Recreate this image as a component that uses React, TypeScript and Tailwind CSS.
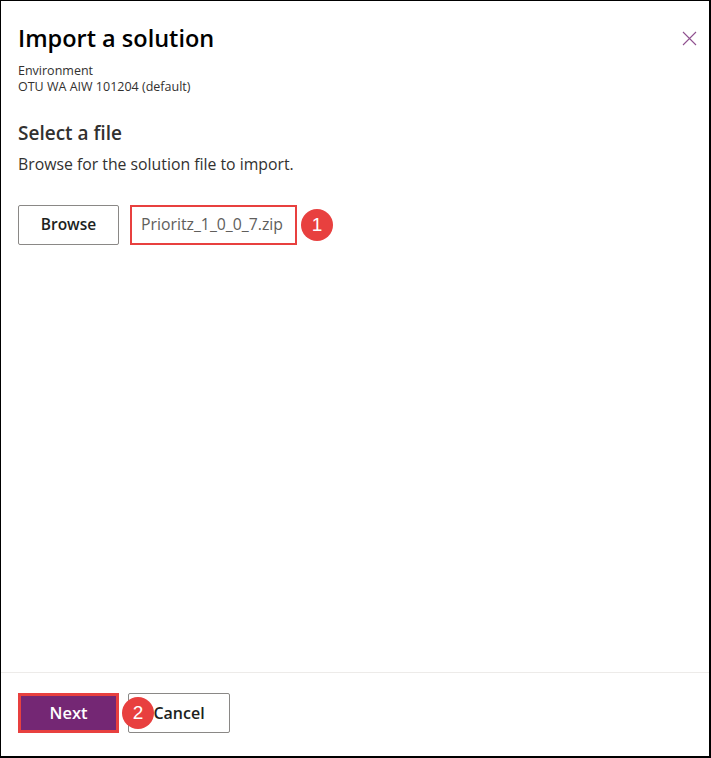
import React from "react";

export default function App() {
  const font = { fontFamily: '"Open Sans", "Noto Sans", sans-serif' };
  return (
    <div
      className="w-[711px] h-[758px] bg-white border-l border-t border-r-2 border-b-2 border-black flex flex-col text-[#323130]"
      style={font}
    >
      <div className="flex-1 px-[17px] pt-[20px] relative">
        <div className="flex items-start justify-between">
          <h1 className="text-[23.5px] font-semibold leading-[34px] text-black">Import a solution</h1>
          <button className="mt-[10px] mr-[-5px] text-[#742774]">
            <svg width="15" height="15" viewBox="0 0 15 15" fill="none" stroke="currentColor" strokeWidth="1.1" opacity="0.8">
              <path d="M1 1 L14 14 M14 1 L1 14" />
            </svg>
          </button>
        </div>
        <div className="mt-[8px] text-[12.5px] leading-[16px] text-[#323130]">
          <div>Environment</div>
          <div>OTU WA AIW 101204 (default)</div>
        </div>
        <h2 className="mt-[25px] text-[19px] font-semibold leading-[26px] text-[#323130]">Select a file</h2>
        <p className="mt-[7px] text-[15.8px] leading-[22px] text-[#323130]">Browse for the solution file to import.</p>
        <div className="mt-[30px] flex items-center">
          <button className="w-[101px] h-[40px] border border-[#8a8886] rounded-[2px] text-[15.5px] font-semibold text-[#201f1e]">
            Browse
          </button>
          <div className="ml-[11px] w-[167px] h-[40px] border-2 border-[#e8403f] flex items-center pl-[9px] text-[15.8px] text-[#605e5c]">
            Prioritz_1_0_0_7.zip
          </div>
          <div className="ml-[4px] w-[32px] h-[32px] rounded-full bg-[#e8403f] text-white flex items-center justify-center text-[19px]" style={{ fontFamily: '"Liberation Sans", Arial, sans-serif' }}>
            1
          </div>
        </div>
      </div>
      <div className="h-[84px] border-t border-[#edebe9] px-[17px] pt-[20px] flex items-start relative">
        <button className="w-[101px] h-[40px] border-[3px] border-[#e8403f] bg-[#742774] text-white text-[16.5px] font-semibold">
          Next
        </button>
        <button className="ml-[9px] w-[102px] h-[40px] border border-[#8a8886] rounded-[2px] text-[16px] font-semibold text-[#201f1e]">
          Cancel
        </button>
        <div
          className="absolute left-[121px] top-[24px] w-[32px] h-[32px] rounded-full bg-[#e8403f] text-white flex items-center justify-center text-[19px]"
          style={{ fontFamily: '"Liberation Sans", Arial, sans-serif' }}
        >
          2
        </div>
      </div>
    </div>
  );
}
